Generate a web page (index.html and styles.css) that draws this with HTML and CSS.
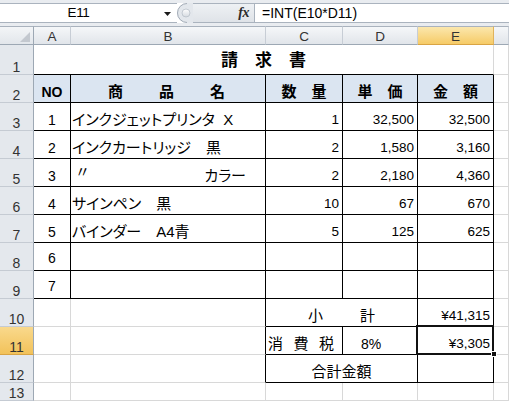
FILE: index.html
```html
<!DOCTYPE html>
<html lang="ja">
<head>
<meta charset="utf-8">
<title>請求書</title>
<link rel="stylesheet" href="styles.css">
</head>
<body>
<div class="app">
  <div class="fbar">
    <div class="namebox">
      <span class="nb-text">E11</span>
      <span class="nb-dd"><svg width="7" height="4" viewBox="0 0 7 4"><path d="M0 0H7L3.5 4Z" fill="#1a1a1a"/></svg></span>
    </div>
    <div class="grip">
      <svg width="16" height="20" viewBox="0 0 16 20">
        <defs>
          <linearGradient id="g1" x1="0" y1="0" x2="0" y2="1">
            <stop offset="0" stop-color="#ffffff"/>
            <stop offset="1" stop-color="#d5dae0"/>
          </linearGradient>
        </defs>
        <path d="M10 0 A10 10 0 0 0 10 20 H16 V0 Z" fill="#e3e7ec"/>
        <path d="M10 0.5 A9.5 9.5 0 0 0 10 19.5" fill="none" stroke="#a3acb7" stroke-width="1"/>
        <circle cx="9" cy="10" r="4" fill="url(#g1)" stroke="#b9c0c9" stroke-width="0.8"/>
      </svg>
    </div>
    <div class="fxbox"><span class="fx">fx</span></div>
    <div class="formula">=INT(E10*D11)</div>
  </div>

  <div class="sheet">
    <!-- column headers -->
    <div class="corner"><svg width="10" height="10" viewBox="0 0 10 10"><path d="M10 0V10H0Z" fill="#c3c8cf"/></svg></div>
    <div class="ch">A</div>
    <div class="ch">B</div>
    <div class="ch">C</div>
    <div class="ch">D</div>
    <div class="ch sel">E</div>
    <div class="ch"></div>

    <!-- row 1 -->
    <div class="rh">1</div>
    <div class="c bb title span5">請　求　書</div>
    <div class="c"></div>

    <!-- row 2 -->
    <div class="rh">2</div>
    <div class="c bb brr hd ctr latin">NO</div>
    <div class="c bb brr hd dist"><span>商</span><span>品</span><span>名</span></div>
    <div class="c bb brr hd ctr">数　量</div>
    <div class="c bb brr hd ctr">単　価</div>
    <div class="c bb brr hd ctr">金　額</div>
    <div class="c"></div>

    <!-- row 3 -->
    <div class="rh">3</div>
    <div class="c bb brr ctr n">1</div>
    <div class="c bb brr txt">インクジェットプリンタ&nbsp;&nbsp;X</div>
    <div class="c bb brr num">1</div>
    <div class="c bb brr num">32,500</div>
    <div class="c bb brr num">32,500</div>
    <div class="c"></div>

    <!-- row 4 -->
    <div class="rh">4</div>
    <div class="c bb brr ctr n">2</div>
    <div class="c bb brr txt">インクカートリッジ　黒</div>
    <div class="c bb brr num">2</div>
    <div class="c bb brr num">1,580</div>
    <div class="c bb brr num">3,160</div>
    <div class="c"></div>

    <!-- row 5 -->
    <div class="rh">5</div>
    <div class="c bb brr ctr n">3</div>
    <div class="c bb brr ditto"><span class="mark">〃</span><span class="tail">カラー</span></div>
    <div class="c bb brr num">2</div>
    <div class="c bb brr num">2,180</div>
    <div class="c bb brr num">4,360</div>
    <div class="c"></div>

    <!-- row 6 -->
    <div class="rh">6</div>
    <div class="c bb brr ctr n">4</div>
    <div class="c bb brr txt">サインペン　黒</div>
    <div class="c bb brr num">10</div>
    <div class="c bb brr num">67</div>
    <div class="c bb brr num">670</div>
    <div class="c"></div>

    <!-- row 7 -->
    <div class="rh">7</div>
    <div class="c bb brr ctr n">5</div>
    <div class="c bb brr txt">バインダー　A4青</div>
    <div class="c bb brr num">5</div>
    <div class="c bb brr num">125</div>
    <div class="c bb brr num">625</div>
    <div class="c"></div>

    <!-- row 8 -->
    <div class="rh">8</div>
    <div class="c bb brr ctr n up">6</div>
    <div class="c bb brr"></div>
    <div class="c bb brr"></div>
    <div class="c bb brr"></div>
    <div class="c bb brr"></div>
    <div class="c"></div>

    <!-- row 9 -->
    <div class="rh">9</div>
    <div class="c bb brr ctr n up">7</div>
    <div class="c bb brr"></div>
    <div class="c bb brr"></div>
    <div class="c bb brr"></div>
    <div class="c bb brr"></div>
    <div class="c"></div>

    <!-- row 10 -->
    <div class="rh">10</div>
    <div class="c"></div>
    <div class="c brr"></div>
    <div class="c bb brr span2 ctr gap"><span>小</span><span>計</span></div>
    <div class="c bb brr num">¥41,315</div>
    <div class="c"></div>

    <!-- row 11 -->
    <div class="rh sel">11</div>
    <div class="c"></div>
    <div class="c brr"></div>
    <div class="c bb brr spread"><span>消</span><span>費</span><span>税</span></div>
    <div class="c bb brr ctr pct">8%</div>
    <div class="c bb brr num active">¥3,305<span class="selbox"></span><span class="handle"></span></div>
    <div class="c"></div>

    <!-- row 12 -->
    <div class="rh">12</div>
    <div class="c"></div>
    <div class="c brr"></div>
    <div class="c bb brr span2 ctr jp">合計金額</div>
    <div class="c bb brr"></div>
    <div class="c"></div>

    <!-- row 13 -->
    <div class="rh">13</div>
    <div class="c"></div>
    <div class="c"></div>
    <div class="c"></div>
    <div class="c"></div>
    <div class="c"></div>
    <div class="c"></div>
  </div>
</div>
</body>
</html>
```

FILE: styles.css
```css
html, body {
  margin: 0;
  padding: 0;
  background: #ffffff;
}

body {
  width: 509px;
  height: 402px;
  overflow: hidden;
  font-family: "Liberation Sans", "Noto Sans CJK JP", sans-serif;
  color: #000;
}

.app {
  width: 509px;
  height: 402px;
  display: flex;
  flex-direction: column;
}

/* ---------- formula bar ---------- */
.fbar {
  height: 26px;
  box-sizing: border-box;
  padding: 3px 0 3px 0;
  background: #e9ecf0;
  display: flex;
}

.namebox {
  width: 177px;
  height: 20px;
  box-sizing: border-box;
  background: #fff;
  border-top: 1px solid #aab3be;
  border-bottom: 1px solid #aab3be;
  display: flex;
  align-items: center;
}

.nb-text {
  width: 157px;
  text-align: center;
  font-size: 13.5px;
  letter-spacing: -0.4px;
  line-height: 18px;
}

.nb-dd {
  width: 20px;
  display: flex;
  justify-content: center;
  align-items: center;
  padding-top: 1px;
}

.grip {
  width: 16px;
  height: 20px;
  background: #fff;
  display: flex;
}

.fxbox {
  width: 62px;
  height: 20px;
  box-sizing: border-box;
  background: linear-gradient(#eef1f4, #dfe3e8);
  border-top: 1px solid #aab3be;
  border-bottom: 1px solid #aab3be;
  border-right: 1px solid #aab3be;
  display: flex;
  justify-content: flex-end;
  align-items: center;
  padding-right: 5px;
}

.fx {
  font-family: "Liberation Serif", serif;
  font-style: italic;
  font-weight: bold;
  font-size: 14px;
  color: #2b2b2b;
  letter-spacing: -0.5px;
}

.formula {
  flex: 1;
  height: 20px;
  box-sizing: border-box;
  background: #fff;
  border-top: 1px solid #aab3be;
  border-bottom: 1px solid #aab3be;
  padding-left: 7px;
  font-size: 14px;
  line-height: 18px;
}

/* ---------- sheet grid ---------- */
.sheet {
  display: grid;
  grid-template-columns: 34px 37px 195px 77px 75px 76px 15px;
  grid-template-rows: 19px 30px repeat(11, 28px) 18px;
}

.sheet > div {
  box-sizing: border-box;
  min-width: 0;
}

.corner {
  background: linear-gradient(#f3f5f7, #e2e6eb);
  border-top: 1px solid #a9b2bd;
  border-bottom: 1px solid #9da8b4;
  border-right: 1px solid #9da8b4;
  display: flex;
  justify-content: flex-end;
  align-items: flex-end;
  padding: 0 3px 2px 0;
}

.ch {
  background: linear-gradient(#f5f7f9, #e1e5ea);
  border-top: 1px solid #a9b2bd;
  border-bottom: 1px solid #9da8b4;
  border-right: 1px solid #c7cdd5;
  font-size: 13.5px;
  color: #333;
  display: flex;
  justify-content: center;
  align-items: center;
  padding-top: 1px;
}

.ch.sel {
  background: linear-gradient(#fbe7ad, #f6cb67);
  border-bottom-color: #d9a444;
  border-right-color: #e0b35c;
}

.rh {
  background: #e4e8ed;
  border-right: 1px solid #9da8b4;
  border-bottom: 1px solid #c5cbd3;
  font-size: 14px;
  line-height: 12px;
  color: #333;
  display: flex;
  justify-content: center;
  align-items: flex-end;
  padding-bottom: 1px;
}

.rh.sel {
  background: linear-gradient(#f9d98c, #f2c25a);
  border-bottom-color: #d9a444;
}

.c {
  border-right: 1px solid #d8d8d8;
  border-bottom: 1px solid #d8d8d8;
  display: flex;
  align-items: flex-end;
  line-height: 20px;
  font-size: 15px;
  white-space: nowrap;
  overflow: hidden;
}

.bb { border-bottom-color: #000; }
.brr { border-right-color: #000; }

.span5 { grid-column: span 5; }
.span2 { grid-column: span 2; }

.title {
  justify-content: center;
  font-size: 17px;
  font-weight: bold;
  padding-bottom: 3px;
}

.hd {
  background: #dbe5f1;
  font-weight: bold;
  font-size: 15px;
}

.latin { font-size: 14px; }

.ctr { justify-content: center; }

.n { font-size: 14px; }
.up { padding-bottom: 2px; }

.dist {
  justify-content: space-between;
  padding: 0 40px 0 37px;
}

.txt {
  padding-left: 1px;
  font-feature-settings: "palt";
}

.ditto {
  padding: 0 19px 0 4px;
  justify-content: space-between;
}

.ditto .mark {
  position: relative;
  top: -4px;
}

.ditto .tail { font-feature-settings: "palt"; }

.num {
  justify-content: flex-end;
  padding-right: 3px;
  font-size: 13.5px;
}

.gap { gap: 37px; }

.spread {
  justify-content: space-between;
  padding: 0 8px 0 2px;
}

.pct {
  font-size: 14px;
  padding-right: 18px;
}

.active {
  position: relative;
  overflow: visible;
}

.selbox {
  position: absolute;
  left: -2px;
  top: -2px;
  width: 78px;
  height: 30px;
  box-sizing: border-box;
  border: 2px solid #111;
}

.handle {
  position: absolute;
  left: 73px;
  top: 24px;
  width: 6px;
  height: 6px;
  box-sizing: border-box;
  background: #111;
  border: 1px solid #fff;
}
```
